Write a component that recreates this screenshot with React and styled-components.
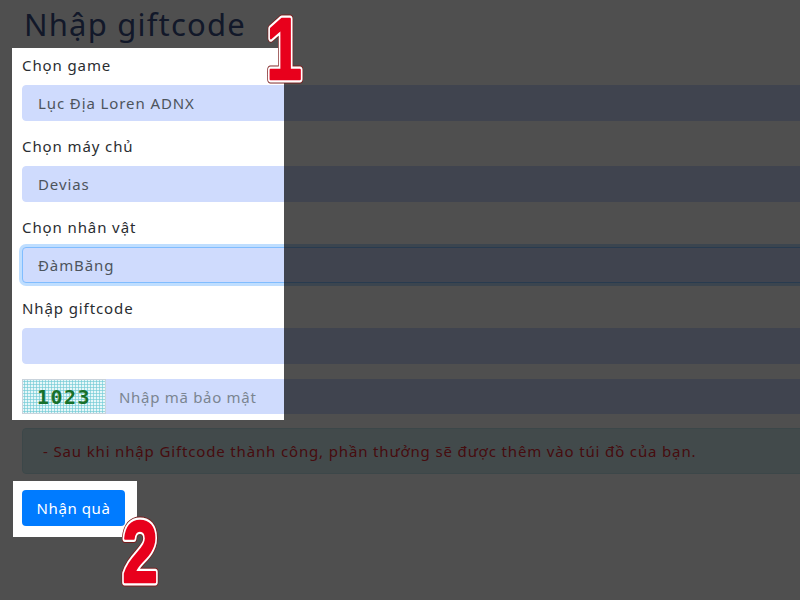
import React from "react";
import styled, { createGlobalStyle } from "styled-components";

const GlobalStyle = createGlobalStyle`
  html, body { margin: 0; padding: 0; background: #ffffff; overflow: hidden; }
  body { font-family: "Noto Sans", "Liberation Sans", sans-serif; width: 800px; height: 600px; }
  * { box-sizing: border-box; }
`;

const Page = styled.div`
  width: 1100px;
  padding: 6px 0 0 22px;
`;

const Title = styled.h1`
  margin: 0 0 14px 2px;
  font-size: 31px;
  line-height: 36px;
  font-weight: 400;
  letter-spacing: 1.2px;
  color: #3a4f86;
`;

const Group = styled.div`
  margin-bottom: ${(p) => p.$mb ?? 16}px;
`;

const Label = styled.label`
  display: block;
  font-size: 15px;
  line-height: 18px;
  letter-spacing: 0.9px;
  color: #2a2d31;
  margin-bottom: 11px;
`;

const Field = styled.div`
  height: 36px;
  display: flex;
  align-items: center;
  padding: 0 15px;
  background: #cfdbfd;
  border: 1px solid ${(p) => (p.$focus ? "#80bdff" : "#cfdbfd")};
  border-radius: 4px;
  box-shadow: ${(p) => (p.$focus ? "0 0 0 3px rgba(0,123,255,0.25)" : "none")};
  font-size: 15px;
  letter-spacing: 0.9px;
  color: #4d545c;
`;

const CaptchaRow = styled.div`
  display: flex;
  height: 35px;
`;

const CaptchaImg = styled.div`
  width: 84px;
  flex: none;
  display: flex;
  align-items: center;
  justify-content: center;
  border: 1px solid #c9d3dc;
  background-color: #e6f7f9;
  background-image: radial-gradient(circle, #7fcfd9 0.9px, transparent 1.3px);
  background-size: 3px 3px;
  font-family: "DejaVu Sans Mono", "Liberation Mono", monospace;
  font-weight: 700;
  font-size: 20px;
  letter-spacing: 1.5px;
  color: #17702a;
`;

const CaptchaInput = styled.div`
  flex: 1;
  display: flex;
  align-items: center;
  padding: 0 13px;
  background: #cfdbfd;
  font-size: 15px;
  letter-spacing: 0.7px;
  color: #7b8591;
`;

const Alert = styled.div`
  margin-top: 14px;
  height: 46px;
  display: flex;
  align-items: center;
  padding: 0 20px;
  background: #d5eff3;
  border: 1px solid #c3e6eb;
  border-radius: 4px;
  font-size: 15px;
  letter-spacing: 0.85px;
  color: #e02a32;
`;

const Button = styled.button`
  margin-top: 16px;
  width: 103px;
  height: 36px;
  border: none;
  border-radius: 4px;
  background: #007bff;
  color: #ffffff;
  font-family: "Noto Sans", "Liberation Sans", sans-serif;
  font-size: 15px;
  letter-spacing: 0.6px;
  padding: 0;
`;

const Shade = styled.svg`
  position: fixed;
  left: 0;
  top: 0;
  pointer-events: none;
`;

const Marker = styled.svg`
  position: fixed;
  left: ${(p) => p.$x}px;
  top: ${(p) => p.$y}px;
  overflow: visible;
`;

function Num({ x, y, children }) {
  const common = {
    x: 20,
    y: 65,
    textAnchor: "middle",
    fontFamily: "'Liberation Sans', Arial, sans-serif",
    fontWeight: 700,
    fontSize: 88,
  };
  return (
    <Marker $x={x} $y={y} width="40" height="72" viewBox="0 0 40 72">
      <g transform="translate(20 0) scale(0.72 1) translate(-20 0)">
        <text {...common} fill="#8a0010" stroke="#7a1b1b" strokeWidth="9" strokeLinejoin="round">{children}</text>
        <text {...common} fill="#ffffff" stroke="#ffffff" strokeWidth="7" strokeLinejoin="round">{children}</text>
        <text {...common} fill="#e8001c" stroke="#e8001c" strokeWidth="2.5" strokeLinejoin="round">{children}</text>
      </g>
    </Marker>
  );
}

export default function App() {
  return (
    <>
      <GlobalStyle />
      <Page>
        <Title>Nhập giftcode</Title>
        <Group>
          <Label>Chọn game</Label>
          <Field>Lục Địa Loren ADNX</Field>
        </Group>
        <Group>
          <Label>Chọn máy chủ</Label>
          <Field>Devias</Field>
        </Group>
        <Group>
          <Label>Chọn nhân vật</Label>
          <Field $focus>ĐàmBăng</Field>
        </Group>
        <Group $mb={15}>
          <Label>Nhập giftcode</Label>
          <Field />
        </Group>
        <CaptchaRow>
          <CaptchaImg>1023</CaptchaImg>
          <CaptchaInput>Nhập mã bảo mật</CaptchaInput>
        </CaptchaRow>
        <Alert>- Sau khi nhập Giftcode thành công, phần thưởng sẽ được thêm vào túi đồ của bạn.</Alert>
        <Button>Nhận quà</Button>
      </Page>
      <Shade width="800" height="600" viewBox="0 0 800 600">
        <path
          fillRule="evenodd"
          fill="rgba(0,0,0,0.69)"
          d="M0 0H800V600H0Z M12 48H284V420H12Z M13 481H137V537H13Z"
        />
      </Shade>
      <Num x={264} y={14}>1</Num>
      <Num x={120} y={517}>2</Num>
    </>
  );
}
